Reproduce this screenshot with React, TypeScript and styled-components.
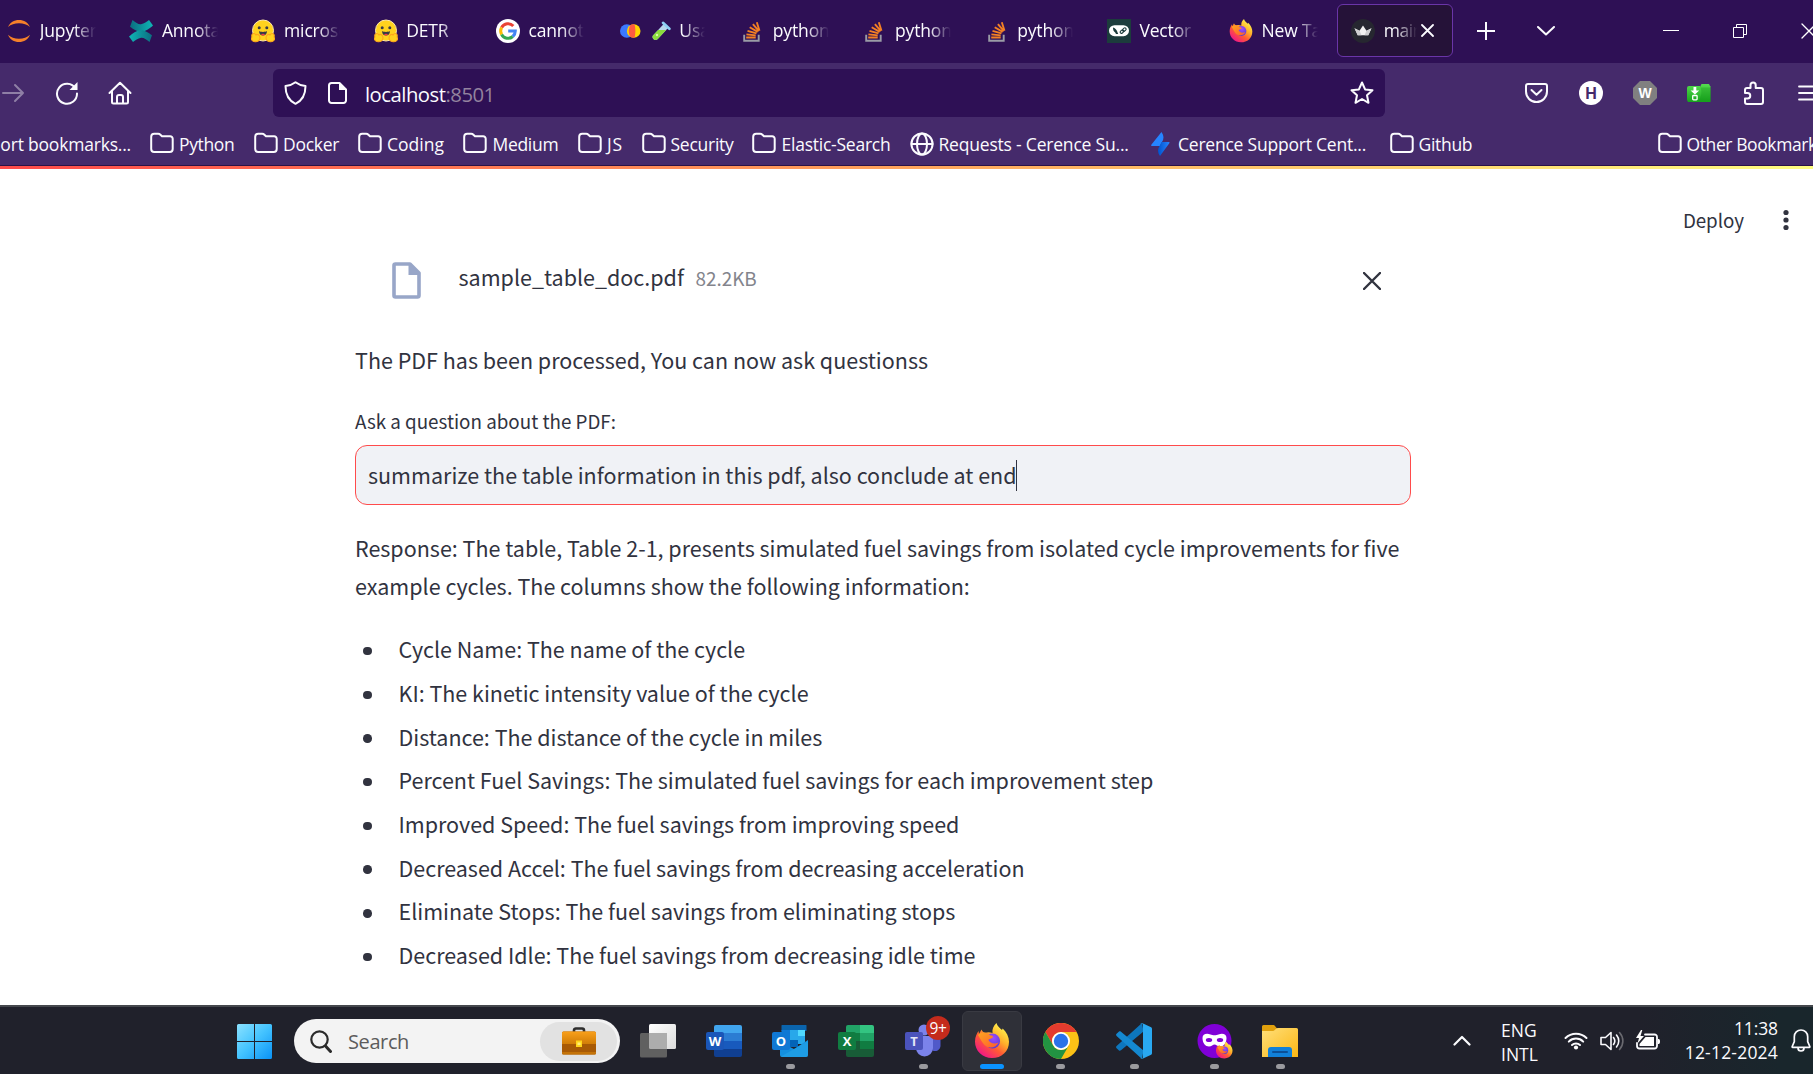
import React from "react";
import styled, { createGlobalStyle } from "styled-components";

const uiFont = `"Open Sans", "Noto Sans", sans-serif`;
const pageFont = `"Noto Sans CJK SC", "Noto Sans", sans-serif`;

const GlobalStyle = createGlobalStyle`
  * { box-sizing: border-box; }
  html, body { margin: 0; padding: 0; overflow: hidden; background: #fff; }
  svg { display: block; flex: none; }
`;

const Screen = styled.div`
  width: 1813px;
  height: 1074px;
  display: flex;
  flex-direction: column;
  overflow: hidden;
  font-family: ${uiFont};
`;

const Label = styled.span<{ $size: number; $ls?: number; $color?: string }>`
  font-size: ${(p) => p.$size}px;
  letter-spacing: ${(p) => p.$ls ?? 0}px;
  color: ${(p) => p.$color ?? "#fbfbfe"};
  white-space: nowrap;
`;

/* ---------- tab strip ---------- */
const TabStrip = styled.div`
  height: 63px;
  flex: none;
  display: flex;
  align-items: flex-start;
  padding: 4px 0 0;
  margin-left: -7px;
  background: #2e1055;
  width: 1830px;
`;
const Tab = styled.div<{ $active?: boolean }>`
  width: 116.2px;
  margin-right: 6px;
  height: 53px;
  flex: none;
  display: flex;
  align-items: center;
  padding: 0 13px;
  gap: 8.7px;
  border-radius: 6px;
  border: 1px solid ${(p) => (p.$active ? "#6a35a8" : "transparent")};
  background: ${(p) => (p.$active ? "#251238" : "transparent")};
`;
const TabTitle = styled.div<{ $w: number }>`
  width: ${(p) => p.$w}px;
  flex: none;
  overflow: hidden;
  line-height: 26px;
  mask-image: linear-gradient(to right, #000 calc(100% - 22px), transparent);
`;
const TabClose = styled.div`
  margin-left: -4.5px;
`;
const StripButton = styled.div<{ $w: number; $ml: number }>`
  width: ${(p) => p.$w}px;
  margin-left: ${(p) => p.$ml}px;
  height: 53px;
  flex: none;
  display: flex;
  align-items: center;
  justify-content: center;
`;

/* ---------- navigation ---------- */
const Chrome = styled.div`
  height: 103px;
  flex: none;
  background: #452a6b;
  border-bottom: 1px solid #2b1247;
`;
const NavRow = styled.div`
  height: 60px;
  display: flex;
  align-items: center;
`;
const NavSlot = styled.div<{ $w: number; $ml?: number }>`
  width: ${(p) => p.$w}px;
  margin-left: ${(p) => p.$ml ?? 0}px;
  flex: none;
  display: flex;
  justify-content: center;
`;
const UrlBar = styled.div`
  width: 1112px;
  height: 48px;
  margin-left: 141px;
  flex: none;
  display: flex;
  align-items: center;
  padding: 0 11px;
  border-radius: 6px;
  background: #2e1055;
`;
const UrlText = styled.div`
  margin-left: 18px;
  flex: 1;
  padding-top: 3px;
  line-height: 28px;
`;
const UrlPort = styled.span`
  color: #93839f;
`;
const Bookmarks = styled.div`
  height: 42px;
  padding-bottom: 1px;
  display: flex;
  align-items: center;
`;
const Bookmark = styled.div<{ $w: number; $gap: number }>`
  width: ${(p) => p.$w}px;
  flex: none;
  display: flex;
  align-items: center;
  gap: ${(p) => p.$gap}px;
  line-height: 24px;
`;
const BookmarkText = styled.div`
  padding-top: 1px;
`;
const Import = styled.div`
  width: 131px;
  padding-top: 1px;
  display: flex;
  justify-content: flex-end;
`;

/* ---------- page ---------- */
const LoadBar = styled.div`
  height: 3px;
  flex: none;
  background: linear-gradient(to right, #ff4b4b, #ffa45c 50%, #fffd80);
`;
const Page = styled.main`
  height: 836px;
  flex: none;
  background: #fff;
  font-family: ${pageFont};
`;
const PageHeader = styled.div`
  height: 67px;
  padding: 36px 23px 0 0;
  display: flex;
  justify-content: flex-end;
  line-height: 30px;
`;
const Dots = styled.div`
  margin-left: 38px;
  padding-top: 4px;
`;
const Content = styled.div`
  width: 1056px;
  margin-left: 355px;
`;
const FileRow = styled.div`
  height: 44px;
  margin-top: 22px;
  padding: 0 30px 0 37px;
  display: flex;
  align-items: center;
`;
const FileName = styled.div`
  flex: 1;
  margin: -5px 0 0 37.5px;
  line-height: 38px;
  display: flex;
  align-items: baseline;
  gap: 11.5px;
`;
const Remove = styled.div`
  padding-top: 2px;
`;
const Paragraph = styled.div<{ $mt: number }>`
  margin-top: ${(p) => p.$mt}px;
  line-height: 38px;
  display: flex;
  flex-direction: column;
  align-items: flex-start;
`;
const FieldLabel = styled.div`
  margin-top: 27.4px;
  height: 30px;
  line-height: 30px;
`;
const Field = styled.div`
  height: 60px;
  margin-top: 9px;
  padding: 0 0 0 12px;
  display: flex;
  align-items: center;
  line-height: 30px;
  border: 1px solid #ff4b4b;
  border-radius: 12px;
  background: #f0f2f6;
`;
const FieldText = styled.div`
  padding-top: 1px;
`;
const Caret = styled.div`
  width: 1px;
  height: 31px;
  margin-left: -0.5px;
  background: #31333f;
`;
const List = styled.ul`
  list-style: none;
  margin: 21.9px 0 0;
  padding: 0 0 0 8px;
`;
const Item = styled.li`
  height: 43.7px;
  line-height: 43.7px;
  display: flex;
  align-items: center;
  gap: 27px;
  &::before {
    content: "";
    width: 8.5px;
    height: 8.5px;
    border-radius: 50%;
    background: #31333f;
    margin-top: 4px;
  }
`;

/* ---------- taskbar ---------- */
const Taskbar = styled.div`
  height: 69px;
  flex: none;
  border-top: 2px solid #45484d;
  display: flex;
  align-items: flex-start;
  background: linear-gradient(to right, #20212b 0, #20212b 1640px, #19262c 1780px);
`;
const Start = styled.div`
  margin: 17px 0 0 237px;
`;
const Search = styled.div`
  width: 326px;
  height: 44px;
  margin: 12px 0 0 22px;
  padding: 0 3px 0 16px;
  flex: none;
  display: flex;
  align-items: center;
  border-radius: 22px;
  background: #f3f3f3;
`;
const SearchText = styled.div`
  flex: 1;
  margin-left: 16px;
`;
const SearchHighlight = styled.div`
  width: 77px;
  height: 39px;
  border-radius: 20px;
  background: #e2e2e2;
  display: flex;
  align-items: center;
  justify-content: center;
`;
const AppButton = styled.div<{ $ml: number; $active?: boolean }>`
  position: relative;
  width: 60px;
  height: 60px;
  margin: 4px 0 0 ${(p) => p.$ml}px;
  flex: none;
  display: flex;
  flex-direction: column;
  align-items: center;
  justify-content: space-between;
  padding: 11px 0 1px;
  border-radius: 6px;
  border: 1px solid ${(p) => (p.$active ? "#393a42" : "transparent")};
  background: ${(p) => (p.$active ? "#2f3038" : "transparent")};
`;
const Running = styled.div<{ $active?: boolean }>`
  width: ${(p) => (p.$active ? 24 : 9)}px;
  height: 5px;
  border-radius: 3px;
  background: ${(p) => (p.$active ? "#0a93ff" : "#9a9a9e")};
`;
const Badge = styled.div`
  position: absolute;
  left: 32px;
  top: 4px;
  width: 24px;
  height: 24px;
  border-radius: 50%;
  background: #c42b1c;
  display: flex;
  align-items: center;
  justify-content: center;
`;
const TraySlot = styled.div<{ $w: number; $ml: number }>`
  width: ${(p) => p.$w}px;
  margin-left: ${(p) => p.$ml}px;
  height: 67px;
  flex: none;
  display: flex;
  align-items: center;
  justify-content: center;
`;
const TrayText = styled.div<{ $w: number; $ml: number; $right?: boolean }>`
  width: ${(p) => p.$w}px;
  margin: ${(p) => (p.$right ? 9 : 12)}px 0 0 ${(p) => p.$ml}px;
  flex: none;
  display: flex;
  flex-direction: column;
  align-items: ${(p) => (p.$right ? "flex-end" : "flex-start")};
  line-height: ${(p) => (p.$right ? 24 : 23.5)}px;
`;

/* ---------- icons ---------- */
const line = { fill: "none", stroke: "#fbfbfe", strokeWidth: 2, strokeLinecap: "round" as const, strokeLinejoin: "round" as const };

const Jupyter = () => (
  <svg width="24" height="24" viewBox="0 0 24 24" fill="#f5812a">
    <path d="M1 8C3 3.500 7 1 12 1s9 2.500 11 7C20 5.500 16.500 4.300 12 4.300S4 5.500 1 8z" />
    <path d="M1 15.700c2 4.800 6 7.300 11 7.300s9-2.500 11-7.300c-3 2.700-6.500 4-11 4s-8-1.300-11-4z" />
  </svg>
);
const Confluence = () => (
  <svg width="24" height="24" viewBox="0 0 24 24">
    <defs>
      <linearGradient id="cf1" x1="0" x2="1"><stop offset="0" stopColor="#0b6e80" /><stop offset="1" stopColor="#0fb5b5" /></linearGradient>
      <linearGradient id="cf2" x1="0" x2="1"><stop offset="0" stopColor="#0fb5b5" /><stop offset="1" stopColor="#0b6e80" /></linearGradient>
    </defs>
    <path d="M3.500 1C7 3.700 9.500 5.700 12 5.200c3-.5 6-2.700 8-4.200l4 5.500c-3.500 3-7.500 6.300-12 6.300-4 0-8-2.800-11-5z" fill="url(#cf1)" />
    <path d="M20.500 23c-3.500-2.700-6-4.700-8.500-4.200-3 .5-6 2.700-8 4.200l-4-5.500c3.500-3 7.500-6.300 12-6.300 4 0 8 2.800 11 5z" fill="url(#cf2)" />
  </svg>
);
const Hugging = () => (
  <svg width="24" height="24" viewBox="0 0 24 24">
    <circle cx="12" cy="11.500" r="10.500" fill="#ffd21e" stroke="#ffe9a8" strokeWidth="1" />
    <path d="M1 18c-1-3 2-5 4-2 1-1.500 4 0 4 3 0 3-3 4-5 3.700C1.500 22.500-.5 20.500 1 18zM23 18c1-3-2-5-4-2-1-1.500-4 0-4 3 0 3 3 4 5 3.700 2.500-.2 4.500-2.200 3-4.700z" fill="#ffd21e" stroke="#ffa61b" strokeWidth="1.100" />
    <circle cx="8.200" cy="8.700" r="1.500" fill="#3a3b45" /><circle cx="15.800" cy="8.700" r="1.500" fill="#3a3b45" />
    <path d="M8 12c2 1.200 6 1.200 8 0 0 3-1.800 4.600-4 4.600S8 15 8 12z" fill="#3a3b45" />
    <path d="M10 15.600c1-1 3-1 4 0-.8 1.200-3.200 1.200-4 0z" fill="#f23b4a" />
  </svg>
);
const Google = () => (
  <svg width="24" height="24" viewBox="0 0 24 24" fill="none" strokeWidth="3">
    <circle cx="12" cy="12" r="12" fill="#fff" />
    <path d="M17.300 7A7.300 7.300 0 0 0 5.600 8.500" stroke="#ea4335" />
    <path d="M5.600 8.500a7.300 7.300 0 0 0 0 7" stroke="#fbbc05" />
    <path d="M5.600 15.500a7.300 7.300 0 0 0 11.200 2" stroke="#34a853" />
    <path d="M16.800 17.500a7.300 7.300 0 0 0 2.500-5.500H12.200" stroke="#4285f4" />
  </svg>
);
const Circles = () => (
  <svg width="24" height="24" viewBox="0 0 24 24">
    <circle cx="8.800" cy="12" r="6.800" fill="#3b78ff" />
    <circle cx="15.700" cy="12" r="6.800" fill="#ffd500" />
    <path d="M12.200 6.200c1.500-.9 2.800-1 4.300-.9 1.200 4 1.200 9.400 0 13.400-1.500.1-2.800 0-4.300-.9-2-3.500-2-8 0-11.600z" fill="#ff5a40" />
  </svg>
);
const Tube = () => (
  <svg width="20" height="20" viewBox="0 0 20 20">
    <path d="M12.700 3l4.300 4L6.500 18.200c-2.800 2.400-6.600-1.400-4.300-4z" fill="#b8d8ec" />
    <path d="M7.200 9h8L6.500 18.200c-2.800 2.400-6.600-1.400-4.300-4z" fill="#8bdc3c" />
    <path d="M12 1.800l6.400 6" stroke="#8fd0f5" strokeWidth="2.600" strokeLinecap="round" />
    <circle cx="6" cy="14" r="1.200" fill="#d9f7a4" />
  </svg>
);
const StackOverflow = () => (
  <svg width="24" height="24" viewBox="0 0 24 24" fill="none">
    <path d="M5 15.500v6h14.500v-6" transform="translate(-.8 .2)" stroke="#9a9ca6" strokeWidth="1.900" transform-origin="0 0" />
    <path d="M7 18h9.500M7.200 14.900l9.300 1M8.300 11.300l9 2.500M10.500 7.700l8 4.700M13.700 4.700l6 7M17.600 2.800l2.700 8.500" transform="translate(-.8 .5)" stroke="#f48024" strokeWidth="1.900" />
  </svg>
);
const LangChain = () => (
  <svg width="24" height="24" viewBox="0 0 24 24">
    <rect width="24" height="24" fill="#1c3c3c" />
    <rect x="2" y="6.200" width="20" height="11" rx="5.500" fill="#fff" />
    <path d="M6 8.500c2 .5 3.500 2 4 3.500l1.200 3H9l-.8-1.500C6.500 12.500 6 10.500 6 8.500z" fill="#1c3c3c" />
    <g fill="none" stroke="#1c3c3c" strokeWidth="1.100"><rect x="13" y="11.300" width="4" height="2.600" rx="1.300" transform="rotate(-40 15 12.600)" /><rect x="15.300" y="9.300" width="4" height="2.600" rx="1.300" transform="rotate(-40 17.300 10.600)" /></g>
  </svg>
);
const Firefox = ({ size, id }: { size: number; id: string }) => (
  <svg width={size} height={size} viewBox="0 0 36 36">
    <defs>
      <linearGradient id={id + "a"} x1=".85" y1=".1" x2=".2" y2=".95"><stop offset="0" stopColor="#fff44f" /><stop offset=".35" stopColor="#ffb02a" /><stop offset=".62" stopColor="#ff5a34" /><stop offset="1" stopColor="#f0148b" /></linearGradient>
      <radialGradient id={id + "b"} cx=".55" cy=".3" r=".8"><stop offset="0" stopColor="#a04bff" /><stop offset="1" stopColor="#4a3bc8" /></radialGradient>
      <linearGradient id={id + "c"} x1="0" y1="0" x2="1" y2="1"><stop offset="0" stopColor="#ffa51f" /><stop offset="1" stopColor="#ff5b2e" /></linearGradient>
    </defs>
    <path d="M22.500 0c.5 3 3.200 4.800 5.500 7l.7-1.500c4 4 6.300 8.500 6.300 13.200C35 28.500 27.500 35 18 35S1 28 1 18.500c0-5 2.200-8.500 3.500-10.500L5 11l2.500-4.500c.5 1.500 1.500 2.700 3.500 3.300 2.500-1 5.500-.7 7.500.2-.5-3.500.8-7.500 4-10z" fill={`url(#${id}a)`} />
    <circle cx="18.500" cy="18" r="7.600" fill={`url(#${id}b)`} />
    <path d="M4 12c3-3.500 9.500-3.200 12 .3 2 0 3 .7 3 1.700-1 2-4 1.500-4.500 3 1.500 3.500 6 4.500 10 2.500-2 5-9.500 7-14 2.500C7.500 19 6 15 4 12z" fill={`url(#${id}c)`} />
  </svg>
);
const Crown = () => (
  <svg width="24" height="24" viewBox="0 0 24 24">
    <circle cx="12" cy="12" r="12" fill="#262730" />
    <path d="M3.500 9.200l5 2.600L12 6.500l3.500 5.300 5-2.600-3.200 7H6.700z" fill="#f2f2f2" />
    <path d="M3.500 9.200l5 2.600 2 4.400H6.700zM20.500 9.200l-5 2.600-2 4.400h3.800z" fill="#cfcfd2" />
  </svg>
);
const Cross = ({ size, color, sw }: { size: number; color: string; sw: number }) => (
  <svg width={size} height={size} viewBox={`0 0 ${size} ${size}`}><path d={`M1 1L${size - 1} ${size - 1}M${size - 1} 1L1 ${size - 1}`} stroke={color} strokeWidth={sw} strokeLinecap="round" /></svg>
);
const FolderOutline = () => (
  <svg width="24" height="24" viewBox="0 0 24 24"><path d="M1.200 4.700a3 3 0 0 1 3-3h4c1 0 1.500.3 2.200 1L12 4.300h8.200a2.500 2.500 0 0 1 2.500 2.500V17a3 3 0 0 1-3 3H4.200a3 3 0 0 1-3-3z" {...line} /></svg>
);
const Globe = () => (
  <svg width="24" height="24" viewBox="0 0 24 24"><g {...line}><circle cx="12" cy="12" r="10.600" /><ellipse cx="12" cy="12" rx="5" ry="10.600" /><path d="M1.500 12h21" /></g></svg>
);
const Jira = () => (
  <svg width="24" height="24" viewBox="0 0 24 24">
    <defs><linearGradient id="ji" x1="0" x2="1"><stop offset="0" stopColor="#0052cc" /><stop offset="1" stopColor="#2684ff" /></linearGradient></defs>
    <path d="M11.500 0c2.600 3.500 2.700 7 .2 10.500L10 14H1.800c-.8 0-.9-.7-.5-1.200z" fill="#2684ff" />
    <path d="M10 24c-2.600-3.500-2.700-7-.2-10.500L11.500 10h7.300c.8 0 .9.700.5 1.200z" fill="url(#ji)" />
  </svg>
);

const Tile = ({ letter, dark, bands, id }: { letter: string; dark: string; bands: React.ReactNode; id: string }) => (
  <svg width="36" height="36" viewBox="0 0 36 36">
    <defs><clipPath id={id}><rect x="8" y="2" width="28" height="32" rx="2" /></clipPath></defs>
    <g clipPath={`url(#${id})`}>{bands}</g>
    <rect x="0" y="9" width="18" height="18" rx="2" fill={dark} />
    <text x="9" y="22.800" textAnchor="middle" fontFamily="Open Sans" fontWeight="700" fontSize="13" fill="#fff">{letter}</text>
  </svg>
);
const Word = () => (
  <Tile id="wd" letter="W" dark="#1a56b8" bands={<><path fill="#41a5ee" d="M8 2h28v8H8z" /><path fill="#2b7cd3" d="M8 10h28v8H8z" /><path fill="#185abd" d="M8 18h28v8H8z" /><path fill="#103f91" d="M8 26h28v8H8z" /></>} />
);
const Excel = () => (
  <Tile id="xl" letter="X" dark="#107c41" bands={<><path fill="#21a366" d="M8 2h14v8H8z" /><path fill="#33c481" d="M22 2h14v8H22z" /><path fill="#107c41" d="M8 10h14v8H8z" /><path fill="#21a366" d="M22 10h14v8H22z" /><path fill="#185c37" d="M8 18h14v16H8z" /><path fill="#107c41" d="M22 18h14v8H22z" /><path fill="#185c37" d="M22 26h14v8H22z" /></>} />
);
const Outlook = () => (
  <Tile id="ol" letter="O" dark="#0f78d4" bands={<><path fill="#0a64ad" d="M9.500 2h25v6h-25z" /><path fill="#0f78d4" d="M9.500 7H18v17H9.500z" /><path fill="#28a8ea" d="M18 7h8v10h-8z" /><path fill="#50d9ff" d="M26 7h7v6h-7z" /><path fill="#28a8ea" d="M26 13h7v8h-7z" /><path fill="#0364b8" d="M18 17h8v7h-8z" /><path fill="#1490df" d="M8 19l14 7 14-9v17H8z" /><path fill="#28a8ea" d="M8 34l28-16v16z" opacity=".5" /></>} />
);
const Teams = () => (
  <svg width="36" height="36" viewBox="0 0 36 36">
    <circle cx="19" cy="7" r="5.500" fill="#7b83eb" /><circle cx="30" cy="9" r="4" fill="#5059c9" />
    <path d="M24 13h11.500v10a5.500 5.500 0 0 1-8 4.500z" fill="#5059c9" />
    <path d="M11 13h17v12a8.500 8.500 0 0 1-17 0z" fill="#7b83eb" />
    <rect x="0" y="9" width="18" height="18" rx="2" fill="#4b53bc" />
    <text x="9" y="22.800" textAnchor="middle" fontFamily="Open Sans" fontWeight="700" fontSize="13" fill="#e4e5f7">T</text>
  </svg>
);
const TaskView = () => (
  <svg width="36" height="36" viewBox="0 0 36 36">
    <defs><linearGradient id="tv" x1="0" y1="0" x2="1" y2="1"><stop offset="0" stopColor="#fff" /><stop offset="1" stopColor="#dcdcdc" /></linearGradient></defs>
    <rect x="9" y="1" width="27" height="25" rx="1.500" fill="url(#tv)" />
    <rect x="0" y="10" width="27" height="24.500" rx="1.500" fill="#606060" />
    <path d="M9 10h18v16H10.500A1.500 1.500 0 0 1 9 24.500z" fill="#adadad" />
  </svg>
);
const ChromeLogo = () => (
  <svg width="36" height="36" viewBox="0 0 36 36">
    <circle cx="18" cy="18" r="18" fill="#fbc116" />
    <path d="M2.400 9A18 18 0 0 1 33.600 9H18a9 9 0 0 0-7.800 13.500z" fill="#e33b2e" />
    <path d="M2.400 9A18 18 0 0 0 18 36l7.800-13.500a9 9 0 0 1-15.600 0z" fill="#229342" />
    <circle cx="18" cy="18" r="9" fill="#fff" /><circle cx="18" cy="18" r="7.200" fill="#2a72e8" />
  </svg>
);
const VSCode = () => (
  <svg width="36" height="36" viewBox="0 0 36 36">
    <path d="M26 0l1.500 8.500L5 27.300c-.8.600-1.500.6-2 .1L.6 25.200c-.7-.6-.7-1.500 0-2.200z" fill="#0d76bd" />
    <path d="M26 36l1.500-8.500L5 8.700c-.8-.6-1.500-.6-2-.1L.6 10.800c-.7.600-.7 1.500 0 2.200z" fill="#1488d0" />
    <path d="M26 0l8.600 4c.9.400 1.400 1 1.400 2v24c0 1-.5 1.600-1.400 2L26 36c-1 .3-1.400 0-2-.6 1.600 1 3 .2 3-1.700V2.300C27 .4 25.600-.4 24 .6c.6-.6 1-.9 2-.6z" fill="#29a9f2" />
  </svg>
);
const PrivateFirefox = () => (
  <svg width="36" height="36" viewBox="0 0 36 36">
    <circle cx="17.500" cy="18" r="17" fill="#8000d7" />
    <path d="M5.500 15c0-4 4-5 8-3.500 2 .9 6 .9 8 0 4-1.500 8-.5 8 3.500 0 5-3 8.500-6.500 8.500-2.500 0-4-2-5.500-2s-3 2-5.500 2c-3.500 0-6.500-3.500-6.500-8.500z" fill="#fff" />
    <ellipse cx="12" cy="17" rx="3.200" ry="2" fill="#8000d7" /><ellipse cx="23" cy="17" rx="3.200" ry="2" fill="#8000d7" />
    <g transform="translate(18.500 18.500)"><Firefox size={17.5} id="pf" /></g>
  </svg>
);
const Explorer = () => (
  <svg width="36" height="36" viewBox="0 0 36 36">
    <defs><linearGradient id="ex" x1="0" y1="0" x2="1" y2="1"><stop offset="0" stopColor="#ffdf7a" /><stop offset="1" stopColor="#fbb714" /></linearGradient></defs>
    <path d="M0 3.500A1.500 1.500 0 0 1 1.500 2H11c1 0 1.500.3 2 1l2 2.500V12H0z" fill="#e0a00c" />
    <path d="M0 8h10c2 0 2.500-.7 3.500-1.800.8-.8 1.500-1.200 2.500-1.200h18.500A1.500 1.500 0 0 1 36 6.500V34H0z" fill="url(#ex)" />
    <path d="M6 34v-7a3 3 0 0 1 3-3h18a3 3 0 0 1 3 3v7z" fill="#1180d8" />
    <path d="M11 29h14" stroke="#0b4f96" strokeWidth="2" strokeLinecap="round" />
  </svg>
);
const Briefcase = () => (
  <svg width="34" height="28" viewBox="0 0 34 28">
    <defs><linearGradient id="bc" x1="0" y1="0" x2="0" y2="1"><stop offset="0" stopColor="#f9a01b" /><stop offset="1" stopColor="#d17d07" /></linearGradient></defs>
    <path d="M12 5V3.200c0-1 .8-1.700 1.800-1.700h6.400c1 0 1.800.7 1.800 1.700V5" fill="none" stroke="#2d2d2d" strokeWidth="2.600" />
    <rect y="4.500" width="34" height="23" rx="1.500" fill="#a85a05" />
    <path d="M0 6a1.500 1.500 0 0 1 1.500-1.500h31A1.500 1.500 0 0 1 34 6v11H0z" fill="url(#bc)" />
    <path d="M0 25h34v1a1.500 1.500 0 0 1-1.500 1.500h-31A1.500 1.500 0 0 1 0 26z" fill="#c47308" />
    <rect x="14" y="13.500" width="6" height="6.500" fill="#ffd51a" /><rect x="15.500" y="15.500" width="3" height="2.500" fill="#ffef7a" />
  </svg>
);
const GreenFolder = () => (
  <svg width="24" height="20" viewBox="0 0 24 20">
    <defs><linearGradient id="gf" x1="0" y1="0" x2="0" y2="1"><stop offset="0" stopColor="#55dc4f" /><stop offset="1" stopColor="#17a51c" /></linearGradient></defs>
    <path d="M13 4l1.500-3h7.500l1 2h.5v16H1L0 17V5a2 2 0 0 1 2-2h11z" fill="url(#gf)" />
    <path d="M13.500 4.500c2 5 .5 11-3 14h13.500v-14z" fill="#0f8f16" opacity=".3" />
    <path d="M6.500 4h2.800v3.500h2.900L7.900 11.500 3.600 7.500h2.900z" fill="#fff" />
    <rect x="5.700" y="12.500" width="4.400" height="4.300" rx=".8" fill="none" stroke="#fff" strokeWidth="1.300" />
  </svg>
);

/* ---------- data ---------- */
const tabs: { icon: React.ReactNode; title: string; pre?: React.ReactNode }[] = [
  { icon: <Jupyter />, title: "Jupyter" },
  { icon: <Confluence />, title: "Annotate" },
  { icon: <Hugging />, title: "microsoft" },
  { icon: <Hugging />, title: "DETR" },
  { icon: <Google />, title: "cannot" },
  { icon: <Circles />, title: "Usage", pre: <Tube /> },
  { icon: <StackOverflow />, title: "python" },
  { icon: <StackOverflow />, title: "python" },
  { icon: <StackOverflow />, title: "python" },
  { icon: <LangChain />, title: "Vector" },
  { icon: <Firefox size={24} id="ft" />, title: "New Tab" },
];
const bookmarks: { icon: React.ReactNode; text: string; w: number; gap: number; ls: number }[] = [
  { icon: <FolderOutline />, text: "Python", w: 104, gap: 5, ls: -0.35 },
  { icon: <FolderOutline />, text: "Docker", w: 104, gap: 5, ls: -0.27 },
  { icon: <FolderOutline />, text: "Coding", w: 105, gap: 5, ls: 0 },
  { icon: <FolderOutline />, text: "Medium", w: 115, gap: 5.5, ls: -0.3 },
  { icon: <FolderOutline />, text: "JS", w: 64, gap: 5, ls: 0.9 },
  { icon: <FolderOutline />, text: "Security", w: 110, gap: 4.5, ls: -0.25 },
  { icon: <FolderOutline />, text: "Elastic-Search", w: 158, gap: 5.5, ls: -0.24 },
  { icon: <Globe />, text: "Requests - Cerence Su...", w: 240, gap: 4.5, ls: -0.2 },
  { icon: <Jira />, text: "Cerence Support Cent...", w: 240, gap: 4, ls: -0.22 },
  { icon: <FolderOutline />, text: "Github", w: 268, gap: 4.5, ls: -0.3 },
  { icon: <FolderOutline />, text: "Other Bookmarks", w: 200, gap: 4.5, ls: -0.4 },
];
const items = [
  "Cycle Name: The name of the cycle",
  "KI: The kinetic intensity value of the cycle",
  "Distance: The distance of the cycle in miles",
  "Percent Fuel Savings: The simulated fuel savings for each improvement step",
  "Improved Speed: The fuel savings from improving speed",
  "Decreased Accel: The fuel savings from decreasing acceleration",
  "Eliminate Stops: The fuel savings from eliminating stops",
  "Decreased Idle: The fuel savings from decreasing idle time",
];

const ink = "#31333f";

export default function App() {
  return (
    <Screen>
      <GlobalStyle />
      <TabStrip>
        {tabs.map((t, i) => (
          <Tab key={i}>
            {t.icon}
            {t.pre}
            <TabTitle $w={t.pre ? 26 : 56}><Label $size={17.5} $ls={-0.15}>{t.title}</Label></TabTitle>
          </Tab>
        ))}
        <Tab $active>
          <Crown />
          <TabTitle $w={33}><Label $size={17.5} $ls={-0.5}>main</Label></TabTitle>
          <TabClose><Cross size={13} color="#fbfbfe" sw={1.8} /></TabClose>
        </Tab>
        <StripButton $w={20} $ml={16.5}><svg width="18" height="18" viewBox="0 0 18 18"><path d="M9 0v18M0 9h18" stroke="#fbfbfe" strokeWidth="2" /></svg></StripButton>
        <StripButton $w={20} $ml={40.5}><svg width="18" height="10" viewBox="0 0 18 10"><path d="M1 1l8 7.500L17 1" {...line} /></svg></StripButton>
        <StripButton $w={16} $ml={107}><svg width="16" height="2" viewBox="0 0 16 2"><path d="M0 .5h16" stroke="#fff" strokeWidth="1" /></svg></StripButton>
        <StripButton $w={16} $ml={53}><svg width="14" height="14" viewBox="0 0 14 14"><path d="M.5 3.500h10v10H.5zM3.500 3.500v-3h10v10h-3" fill="none" stroke="#fff" strokeWidth="1" /></svg></StripButton>
        <StripButton $w={16} $ml={52.5}><Cross size={16} color="#fff" sw={1.3} /></StripButton>
      </TabStrip>

      <Chrome>
        <NavRow>
          <NavSlot $w={24} $ml={1}><svg width="24" height="20" viewBox="0 0 24 20"><path d="M2 10h20M14 2l8 8-8 8" {...line} stroke="#8f7fa6" /></svg></NavSlot>
          <NavSlot $w={24} $ml={30}>
            <svg width="24" height="24" viewBox="0 0 24 24"><path d="M20.500 7.500A10 10 0 1 0 22 12.500" {...line} /><path d="M22.500 1v8h-8z" fill="#fbfbfe" /></svg>
          </NavSlot>
          <NavSlot $w={24} $ml={29}>
            <svg width="24" height="24" viewBox="0 0 24 24"><path d="M1.500 12L12 1.700 22.500 12M4 10v11a1.500 1.500 0 0 0 1.500 1.500h13A1.500 1.500 0 0 0 20 21V10M9 22v-6a2 2 0 0 1 2-2h2a2 2 0 0 1 2 2v6" {...line} /></svg>
          </NavSlot>
          <UrlBar>
            <svg width="23" height="24" viewBox="0 0 23 24"><path d="M11.500 1.200c3 2.300 6.500 3.500 10 3.800 0 8-3 14.500-10 17.800C4.500 19.500 1.500 13 1.500 5c3.500-.3 7-1.500 10-3.800z" {...line} /></svg>
            <svg width="40" height="22" viewBox="0 0 40 22"><path d="M22 3.500a2.500 2.500 0 0 1 2.500-2.500h8L39 7.500v11a2.500 2.500 0 0 1-2.500 2.500h-12a2.500 2.500 0 0 1-2.500-2.500z" {...line} /><path d="M32 1v7h7z" fill="#fbfbfe" /></svg>
            <UrlText><Label $size={20.3} $ls={-0.5}>localhost<UrlPort>:8501</UrlPort></Label></UrlText>
            <svg width="24" height="24" viewBox="0 0 24 24"><path d="M12 1.500l3.100 6.900 7.400.8-5.500 5 1.500 7.600-6.500-3.800-6.500 3.800L7 14.200l-5.500-5 7.400-.8z" {...line} /></svg>
          </UrlBar>
          <NavSlot $w={24} $ml={139.5}><svg width="23" height="20" viewBox="0 0 23 20"><path d="M3 1h17a2 2 0 0 1 2 2v5.500a10.500 10.500 0 0 1-21 0V3a2 2 0 0 1 2-2zM6.500 7l5 4.700 5-4.700" {...line} /></svg></NavSlot>
          <NavSlot $w={24} $ml={30.5}><svg width="24" height="24" viewBox="0 0 24 24"><circle cx="12" cy="12" r="12" fill="#fff" /><text x="12" y="17.700" textAnchor="middle" fontFamily="Liberation Sans" fontWeight="700" fontSize="16" fill="#452a6b">H</text></svg></NavSlot>
          <NavSlot $w={24} $ml={30}><svg width="24" height="24" viewBox="0 0 24 24"><path d="M7 0h10l7 7v10l-7 7H7l-7-7V7z" fill="#808080" /><text x="12" y="16.700" textAnchor="middle" fontFamily="Liberation Sans" fontWeight="700" fontSize="14" fill="#fff">W</text></svg></NavSlot>
          <NavSlot $w={24} $ml={30}><GreenFolder /></NavSlot>
          <NavSlot $w={24} $ml={30.5}>
            <svg width="24" height="24" viewBox="0 0 24 24"><path d="M8.500 7V4a2.600 2.600 0 0 1 5.200 0v3H19a2 2 0 0 1 2 2v12a2 2 0 0 1-2 2H5a2 2 0 0 1-2-2v-3.500h2.500a2.500 2.500 0 0 0 0-5.500H3V9a2 2 0 0 1 2-2z" {...line} /></svg>
          </NavSlot>
          <NavSlot $w={22} $ml={32}><svg width="22" height="16" viewBox="0 0 22 16"><path d="M1 1.500h20M1 8h20M1 14.500h20" {...line} strokeWidth={1.8} /></svg></NavSlot>
        </NavRow>
        <Bookmarks>
          <Bookmark $w={150} $gap={0}><Import><Label $size={17.5} $ls={-0.2}>Import bookmarks...</Label></Import></Bookmark>
          {bookmarks.map((b) => (
            <Bookmark key={b.text} $w={b.w} $gap={b.gap}>{b.icon}<BookmarkText><Label $size={17.5} $ls={b.ls}>{b.text}</Label></BookmarkText></Bookmark>
          ))}
        </Bookmarks>
      </Chrome>

      <LoadBar />
      <Page>
        <PageHeader>
          <Label $size={18.8} $ls={-0.05} $color={ink}>Deploy</Label>
          <Dots><svg width="8" height="22" viewBox="0 0 8 22" fill={ink}><circle cx="4" cy="3.500" r="2.600" /><circle cx="4" cy="11" r="2.600" /><circle cx="4" cy="18.500" r="2.600" /></svg></Dots>
        </PageHeader>
        <Content>
          <FileRow>
            <svg width="29" height="37" viewBox="0 0 29 37"><path d="M3.500 2h14.500l9 9v22.500a1.500 1.500 0 0 1-1.500 1.500h-22A1.500 1.500 0 0 1 2 33.500v-30A1.500 1.500 0 0 1 3.500 2z" fill="none" stroke="#98a6c8" strokeWidth="3.600" strokeLinejoin="round" /><path d="M16.500 1v12H28z" fill="#98a6c8" /></svg>
            <FileName><Label $size={21.5} $color={ink}>sample_table_doc.pdf</Label><Label $size={18.9} $color="#83848c">82.2KB</Label></FileName>
            <Remove><Cross size={18} color={ink} sw={2.4} /></Remove>
          </FileRow>
          <Paragraph $mt={39}><Label $size={21.5} $color={ink}>The PDF has been processed, You can now ask questionss</Label></Paragraph>
          <FieldLabel><Label $size={18.8} $color={ink}>Ask a question about the PDF:</Label></FieldLabel>
          <Field><FieldText><Label $size={21.5} $color={ink}>summarize the table information in this pdf, also conclude at end</Label></FieldText><Caret /></Field>
          <Paragraph $mt={24}>
            <Label $size={21.5} $ls={-0.006} $color={ink}>Response: The table, Table 2-1, presents simulated fuel savings from isolated cycle improvements for five</Label>
            <Label $size={21.5} $color={ink}>example cycles. The columns show the following information:</Label>
          </Paragraph>
          <List>
            {items.map((text) => (
              <Item key={text}><Label $size={21.5} $ls={-0.012} $color={ink}>{text}</Label></Item>
            ))}
          </List>
        </Content>
      </Page>

      <Taskbar>
        <Start>
          <svg width="35" height="35" viewBox="0 0 35 35">
            <defs><linearGradient id="wn" gradientUnits="userSpaceOnUse" x1="0" y1="0" x2="35" y2="35"><stop offset="0" stopColor="#8be2ff" /><stop offset=".5" stopColor="#43c3ff" /><stop offset="1" stopColor="#0a92f5" /></linearGradient></defs>
            <path d="M1.500 0H17v17H0V1.500A1.500 1.500 0 0 1 1.500 0zM18 0h15.500A1.500 1.500 0 0 1 35 1.500V17H18zM0 18h17v17H1.500A1.500 1.500 0 0 1 0 33.500zM18 18h17v15.500a1.500 1.500 0 0 1-1.500 1.500H18z" fill="url(#wn)" />
          </svg>
        </Start>
        <Search>
          <svg width="22" height="23" viewBox="0 0 22 23"><circle cx="9.500" cy="9.500" r="8.200" fill="none" stroke="#2b2b2b" strokeWidth="2.200" /><path d="M15.500 16l5 5.500" stroke="#2b2b2b" strokeWidth="3" strokeLinecap="round" /></svg>
          <SearchText><Label $size={20} $ls={-0.4} $color="#5c5c5c">Search</Label></SearchText>
          <SearchHighlight><Briefcase /></SearchHighlight>
        </Search>
        <AppButton $ml={8}><TaskView /></AppButton>
        <AppButton $ml={6}><Word /></AppButton>
        <AppButton $ml={6}><Outlook /><Running /></AppButton>
        <AppButton $ml={6}><Excel /></AppButton>
        <AppButton $ml={7}><Teams /><Running /><Badge><Label $size={15.5} $ls={-0.3}>9+</Label></Badge></AppButton>
        <AppButton $ml={8.5} $active><Firefox size={36} id="tb" /><Running $active /></AppButton>
        <AppButton $ml={9}><ChromeLogo /><Running /></AppButton>
        <AppButton $ml={13.5}><VSCode /><Running /></AppButton>
        <AppButton $ml={20.5}><PrivateFirefox /><Running /></AppButton>
        <AppButton $ml={5.5}><Explorer /><Running /></AppButton>
        <TraySlot $w={18} $ml={143}><svg width="18" height="11" viewBox="0 0 18 11"><path d="M1.500 9.500L9 2l7.500 7.500" {...line} strokeWidth={2.2} /></svg></TraySlot>
        <TrayText $w={40} $ml={30}><Label $size={17.5}>ENG</Label><Label $size={17.5}>INTL</Label></TrayText>
        <TraySlot $w={24} $ml={23}>
          <svg width="24" height="19" viewBox="0 0 24 19"><g {...line}><path d="M1.500 7a15 15 0 0 1 21 0M4.800 10.600a10.200 10.200 0 0 1 14.400 0M8 14a5.800 5.800 0 0 1 8 0" /></g><circle cx="12" cy="16.500" r="2.100" fill="#fff" /></svg>
        </TraySlot>
        <TraySlot $w={24} $ml={12}>
          <svg width="24" height="20" viewBox="0 0 24 20"><g {...line} strokeWidth={1.6}><path d="M1 6.500h4.500L11 1.500v17l-5.500-5H1zM13.500 6.500c1.500 2 1.500 5 0 7M16.500 4c3 3.500 3 8.500 0 12" /><path d="M19.500 1.500c4.500 5 4.500 12 0 17" stroke="#6a6a70" /></g></svg>
        </TraySlot>
        <TraySlot $w={24} $ml={12}>
          <svg width="24" height="22" viewBox="0 0 24 22"><path d="M9 4.500h9.500A2.500 2.500 0 0 1 21 7v9a2.500 2.500 0 0 1-2.500 2.500H3.500A2.500 2.500 0 0 1 1 16v-3" {...line} strokeWidth={1.8} /><path d="M22 9c1.500 0 2 .5 2 2.500s-.5 2.500-2 2.500zM9.500 7H18v9H3.500v-2z" fill="#fff" /><path d="M5 0L0 8h3L1.500 13.500 8 6H4.500l1.800-6z" fill="#fff" /></svg>
        </TraySlot>
        <TrayText $w={100} $ml={18} $right><Label $size={17.5} $ls={-0.1}>11:38</Label><Label $size={17.5} $ls={0.2}>12-12-2024</Label></TrayText>
        <TraySlot $w={20} $ml={12.5}>
          <svg width="20" height="23" viewBox="0 0 20 23"><path d="M10 1a6.700 6.700 0 0 0-6.700 6.700v5L1.200 17.500c-.2.500 0 .9.500.9h16.600c.5 0 .7-.4.500-.9l-2.100-4.800v-5A6.700 6.700 0 0 0 10 1zM7 19a3 3 0 0 0 6 0" {...line} strokeWidth={1.7} /></svg>
        </TraySlot>
      </Taskbar>
    </Screen>
  );
}
